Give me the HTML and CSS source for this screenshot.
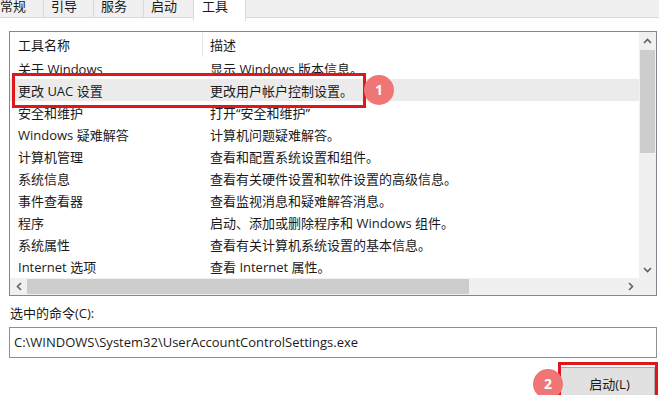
FILE: index.html
```html
<!DOCTYPE html>
<html lang="zh-CN">
<head>
    <meta charset="UTF-8">
    <title>系统配置 - 工具</title>
    <link rel="stylesheet" href="styles.css">
</head>
<body>
    <div class="page">
        <div class="tabs">
            <div class="tab first">常规</div>
            <div class="tab">引导</div>
            <div class="tab">服务</div>
            <div class="tab">启动</div>
            <div class="tab active">工具</div>
        </div>

        <div class="listbox">
            <div class="list-content">
                <div class="row head">
                    <div class="col name">工具名称</div>
                    <div class="col desc">描述</div>
                </div>
                <div class="row"><div class="col name">关于 Windows</div><div class="col desc">显示 Windows 版本信息。</div></div>
                <div class="row selected"><div class="col name">更改 UAC 设置</div><div class="col desc">更改用户帐户控制设置。</div></div>
                <div class="row"><div class="col name">安全和维护</div><div class="col desc">打开“安全和维护”</div></div>
                <div class="row"><div class="col name">Windows 疑难解答</div><div class="col desc">计算机问题疑难解答。</div></div>
                <div class="row"><div class="col name">计算机管理</div><div class="col desc">查看和配置系统设置和组件。</div></div>
                <div class="row"><div class="col name">系统信息</div><div class="col desc">查看有关硬件设置和软件设置的高级信息。</div></div>
                <div class="row"><div class="col name">事件查看器</div><div class="col desc">查看监视消息和疑难解答消息。</div></div>
                <div class="row"><div class="col name">程序</div><div class="col desc">启动、添加或删除程序和 Windows 组件。</div></div>
                <div class="row"><div class="col name">系统属性</div><div class="col desc">查看有关计算机系统设置的基本信息。</div></div>
                <div class="row"><div class="col name">Internet 选项</div><div class="col desc">查看 Internet 属性。</div></div>
            </div>
            <!-- 竖直滚动条 -->
            <div class="vscroll">
                <div class="arrow">
                    <svg width="9" height="6" viewBox="0 0 9 6"><path d="M1 5 L4.5 1.5 L8 5" fill="none" stroke="#606060" stroke-width="1.6"/></svg>
                </div>
                <div class="vthumb"></div>
                <div class="vtrack"></div>
                <div class="arrow">
                    <svg width="9" height="6" viewBox="0 0 9 6"><path d="M1 1 L4.5 4.5 L8 1" fill="none" stroke="#606060" stroke-width="1.6"/></svg>
                </div>
            </div>
            <!-- 水平滚动条 -->
            <div class="hscroll">
                <div class="arrow">
                    <svg width="6" height="9" viewBox="0 0 6 9"><path d="M5 1 L1.5 4.5 L5 8" fill="none" stroke="#606060" stroke-width="1.6"/></svg>
                </div>
                <div class="hthumb"></div>
                <div class="htrack"></div>
                <div class="arrow">
                    <svg width="6" height="9" viewBox="0 0 6 9"><path d="M1 1 L4.5 4.5 L1 8" fill="none" stroke="#606060" stroke-width="1.6"/></svg>
                </div>
            </div>
            <div class="corner"></div>
        </div>

        <div class="cmd-label">选中的命令(C):</div>
        <div class="cmd-box">C:\WINDOWS\System32\UserAccountControlSettings.exe</div>

        <div class="actions">
            <button class="launch">启动(L)</button>
        </div>

        <!-- 标注 -->
        <div class="mark mark-row"></div>
        <div class="badge badge-1">1</div>
        <div class="mark mark-btn"></div>
        <div class="badge badge-2">2</div>
    </div>
</body>
</html>
```

FILE: styles.css
```css
body {
    margin: 0;
    background-color: #fff;
    font-family: "Open Sans", "Noto Sans CJK SC", sans-serif;
    font-size: 13px;
    color: #1a1a1a;
    overflow: hidden;
}
.page {
    position: relative;
    width: 659px;
    height: 395px;
    overflow: hidden;
}
.tabs {
    display: flex;
    background-color: #f0f0f0;
    border-bottom: 1px solid #d9d9d9;
    box-sizing: border-box;
    height: 18px;
}
.tab {
    width: 50px;
    box-sizing: border-box;
    padding-left: 7px;
    border-right: 1px solid #d9d9d9;
    line-height: 13px;
    white-space: nowrap;
}
.tab.first {
    width: 44px;
    padding-left: 0;
}
.tab.active {
    width: 53px;
    height: 21px;
    padding-left: 8px;
    background-color: #fff;
    border-left: 1px solid #d9d9d9;
    margin-left: -1px;
}
.listbox {
    margin: 13px 0 0 9px;
    width: 648px;
    height: 265px;
    box-sizing: border-box;
    border: 1px solid #828790;
    display: grid;
    grid-template-columns: 1fr 17px;
    grid-template-rows: 1fr 17px;
}
.list-content {
    overflow: hidden;
}
.row {
    display: flex;
    height: 22px;
    align-items: center;
    white-space: nowrap;
}
.row.head {
    height: 25px;
}
.row.selected {
    background-color: #ebebeb;
}
.col.name {
    width: 193px;
    padding-left: 8px;
    box-sizing: border-box;
}
.col.desc {
    padding-left: 7px;
}
.row.head .col.name {
    border-right: 1px solid #e5e5e5;
    height: 24px;
    line-height: 24px;
}
.vscroll {
    display: flex;
    flex-direction: column;
    background-color: #f0f0f0;
}
.hscroll {
    display: flex;
    background-color: #f0f0f0;
}
.arrow {
    width: 17px;
    height: 17px;
    display: flex;
    align-items: center;
    justify-content: center;
    flex-shrink: 0;
}
.vthumb {
    height: 103px;
    margin: 1px 1px 0;
    background-color: #cdcdcd;
}
.vtrack {
    flex: 1;
}
.hthumb {
    width: 442px;
    margin: 1px 0;
    background-color: #cdcdcd;
}
.htrack {
    flex: 1;
}
.corner {
    background-color: #f0f0f0;
}
.cmd-label {
    margin: 8px 0 0 10px;
    line-height: 18px;
}
.cmd-box {
    margin: 5px 0 0 9px;
    width: 648px;
    height: 31px;
    box-sizing: border-box;
    border: 1px solid #8e8e8e;
    padding-left: 4px;
    line-height: 28px;
    white-space: nowrap;
}
.actions {
    display: flex;
    justify-content: flex-end;
    margin-top: 9px;
    padding-right: 4px;
}
.launch {
    width: 95px;
    height: 32px;
    font-family: inherit;
    font-size: 13px;
    color: #1a1a1a;
    background-color: #e1e1e1;
    border: 1px solid #adadad;
    padding: 0 0 0 4px;
}
.mark {
    position: absolute;
    border: 3px solid #e0161d;
    box-sizing: border-box;
}
.mark-row {
    left: 12px;
    top: 73px;
    width: 354px;
    height: 35px;
}
.mark-btn {
    left: 558px;
    top: 362px;
    width: 100px;
    height: 40px;
}
.badge {
    position: absolute;
    width: 30px;
    height: 30px;
    border-radius: 50%;
    background-color: #f07575;
    color: #fff;
    font-weight: bold;
    font-size: 14px;
    line-height: 30px;
    text-align: center;
}
.badge-1 {
    left: 364px;
    top: 75px;
}
.badge-2 {
    left: 533px;
    top: 369px;
}
```
